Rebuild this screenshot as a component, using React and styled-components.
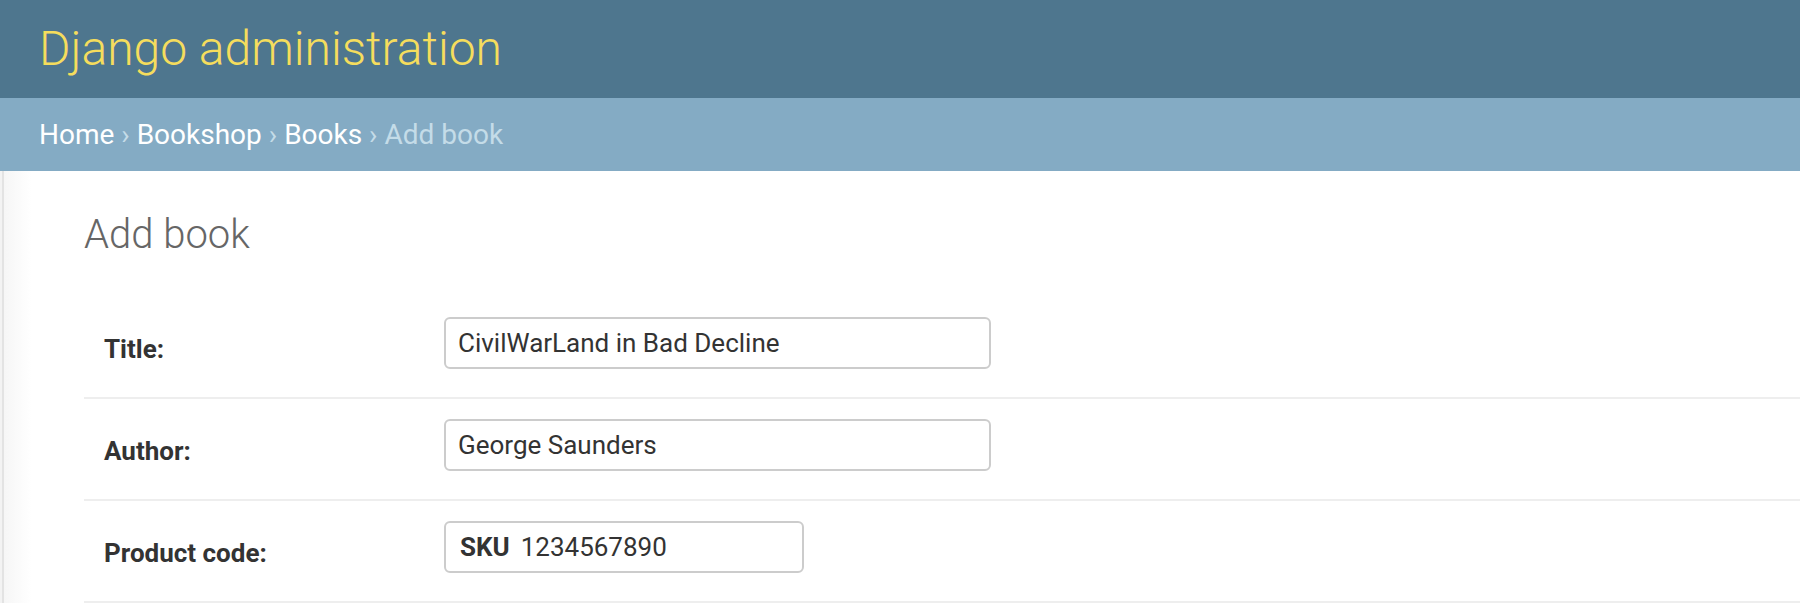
import React from 'react';
import styled, { createGlobalStyle } from 'styled-components';

const Global = createGlobalStyle`
  html, body { margin: 0; padding: 0; background: #fff; }
  body { font-family: Roboto, "Noto Sans", "Liberation Sans", sans-serif; color: #333; }
  * { box-sizing: border-box; }
`;

const Header = styled.header`
  background: #4e768e;
  padding: 20px 39px;
`;

const Branding = styled.h1`
  margin: 0;
  font-size: 48px;
  font-weight: 300;
  line-height: 57.6px;
  color: #f5dd5d;
`;

const Breadcrumbs = styled.nav`
  background: #84abc4;
  padding: 20px 39px;
  font-size: 28px;
  line-height: 33px;
  color: #c4dce8;
`;

const Crumb = styled.a`
  color: #fff;
  text-decoration: none;
`;

const Main = styled.div`
  display: flex;
`;

const SidebarEdge = styled.div`
  flex: 0 0 4px;
  background: #f3f3f3;
  border-right: 2px solid #e3e3e3;
`;

const Content = styled.main`
  flex: 1;
  padding: 40px 0 0 80px;
  background: linear-gradient(90deg, #f6f6f6 0, #fff 28px);
`;

const Title = styled.h1`
  margin: 0 0 38px;
  font-size: 40px;
  font-weight: 300;
  line-height: 48px;
  color: #666;
`;

const Row = styled.div`
  display: flex;
  align-items: flex-start;
  padding: 20px 20px 28px;
  border-bottom: 2px solid #eee;
`;

const Label = styled.label`
  flex: 0 0 340px;
  padding-top: 17px;
  font-size: 26px;
  line-height: 31px;
  font-weight: 700;
  color: #333;
`;

const TextInput = styled.input`
  width: ${(p) => p.$width}px;
  height: 52px;
  padding: 0 12px;
  border: 2px solid #ccc;
  border-radius: 6px;
  font-family: Roboto, "Noto Sans", sans-serif;
  font-size: 26px;
  color: #333;
  background: #fff;
  outline: none;
`;

const PrefixedField = styled.div`
  display: flex;
  align-items: center;
  gap: 11px;
  width: ${(p) => p.$width}px;
  height: 52px;
  padding: 0 12px 0 14px;
  border: 2px solid #ccc;
  border-radius: 6px;
  background: #fff;
`;

const Prefix = styled.span`
  font-size: 26px;
  font-weight: 700;
  color: #333;
`;

const BareInput = styled.input`
  flex: 1;
  min-width: 0;
  border: 0;
  padding: 0;
  outline: none;
  font-family: Roboto, "Noto Sans", sans-serif;
  font-size: 26px;
  color: #333;
  background: transparent;
`;

export default function App() {
  return (
    <>
      <Global />
      <Header>
        <Branding>Django administration</Branding>
      </Header>
      <Breadcrumbs>
        <Crumb href="#">Home</Crumb> › <Crumb href="#">Bookshop</Crumb> ›{' '}
        <Crumb href="#">Books</Crumb> › Add book
      </Breadcrumbs>
      <Main>
        <SidebarEdge />
        <Content>
          <Title>Add book</Title>
          <Row>
            <Label>Title:</Label>
            <TextInput $width={547} defaultValue="CivilWarLand in Bad Decline" />
          </Row>
          <Row>
            <Label>Author:</Label>
            <TextInput $width={547} defaultValue="George Saunders" />
          </Row>
          <Row>
            <Label>Product code:</Label>
            <PrefixedField $width={360}>
              <Prefix>SKU</Prefix>
              <BareInput defaultValue="1234567890" />
            </PrefixedField>
          </Row>
        </Content>
      </Main>
    </>
  );
}
